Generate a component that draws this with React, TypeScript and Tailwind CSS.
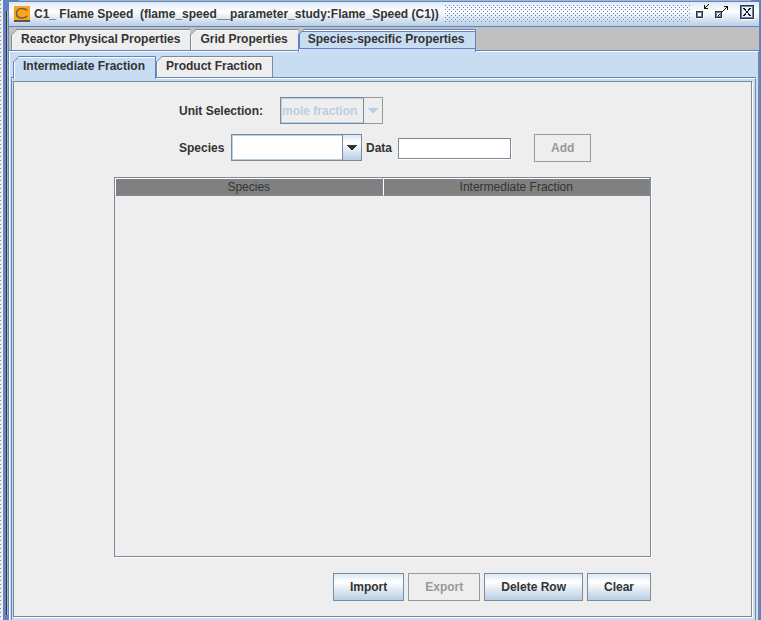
import React, { useState } from "react";
import clsx from "clsx";

const mainTabs = [
  "Reactor Physical Properties",
  "Grid Properties",
  "Species-specific Properties",
];
const fractionTabs = ["Intermediate Fraction", "Product Fraction"];

const TitleBar = () => {
  return (
    <header className="flex h-[25px] items-center border-b border-[#6382bf] bg-linear-to-b from-[#dce9f5] via-white via-40% to-[#b8cfe5] pr-1 pl-[5px]">
      {/* App logo */}
      <svg width="16" height="16" viewBox="0 0 16 16" className="shrink-0" aria-hidden="true">
        <rect width="16" height="16" fill="#fba31c" />
        <rect y="14" width="16" height="2" fill="#5c5548" />
        <path
          d="M13 4.500C12 3 10.500 2.500 8 2.500C4.500 2.500 2.500 4.500 2.500 7.200C2.500 10 4.500 12 8 12C10.500 12 12 11.300 13 10"
          fill="none"
          stroke="#75604a"
          strokeWidth="1.600"
        />
      </svg>
      <h1 className="ml-1 w-[405px] overflow-hidden text-xs font-bold whitespace-pre">
        C1_ Flame Speed  (flame_speed__parameter_study:Flame_Speed (C1))
      </h1>
      <svg className="mr-[6px] ml-[6px] h-[18px] w-0 flex-1" aria-hidden="true">
        <defs>
          <pattern id="bumps" width="4" height="4" patternUnits="userSpaceOnUse">
            <path d="M0 0h1v1h-1zM2 2h1v1h-1z" fill="#6382bf" />
          </pattern>
        </defs>
        <rect width="100%" height="18" fill="url(#bumps)" />
      </svg>
      <div className="flex shrink-0 items-start self-start pt-[2px]">
        <button type="button" aria-label="Minimize" className="mr-[5px]">
          <svg width="14" height="16" viewBox="0 0 14 16" shapeRendering="crispEdges" className="block">
            <path d="M1 8h7v7h-7z" fill="#fff" />
            <path d="M0 7h7v7h-7z" fill="#333" />
            <path d="M1 8h5v5h-5z" fill="#6382bf" />
            <path d="M2 9h3v3h-3z" fill="#fff" />
            <path d="M8 1h1v3h3v1h-4zM9 3h1v1h-1zM10 2h1v1h-1zM11 1h1v1h-1zM12 0h1v1h-1z" fill="#111" />
          </svg>
        </button>
        <button type="button" aria-label="Maximize" className="mr-[11px]">
          <svg width="14" height="16" viewBox="0 0 14 16" shapeRendering="crispEdges" className="block">
            <path d="M1 8h7v7h-7z" fill="#fff" />
            <path d="M0 7h7v7h-7z" fill="#333" />
            <path d="M1 8h5v5h-5z" fill="#6382bf" />
            <path d="M2 9h3v3h-3z" fill="#fff" />
            <path
              d="M9 2h4v4h-1v-3h-3zM11 3h1v1h-1zM10 4h1v1h-1zM9 5h1v1h-1zM8 6h1v1h-1zM7 7h1v1h-1zM4 10h1v1h-1zM3 11h1v1h-1z"
              fill="#111"
            />
          </svg>
        </button>
        <button type="button" aria-label="Close" className="mt-px">
          <svg width="15" height="15" viewBox="0 0 15 15" shapeRendering="crispEdges" className="block">
            <path d="M1 1h14v14h-14z" fill="#fff" />
            <path d="M0 0h14v14h-14z" fill="#333" />
            <path d="M1 1h12v12h-12z" fill="#6382bf" />
            <path d="M2 2h10v10h-10z" fill="#e9f1fa" />
            <path
              d="M3 3h2v1h-2zM4 4h2v1h-2zM5 5h1v1h-1zM6 6h2v2h-2zM5 8h1v1h-1zM4 9h2v1h-2zM3 10h2v1h-2zM9 3h2v1h-2zM8 4h2v1h-2zM8 5h1v1h-1zM8 8h1v1h-1zM8 9h2v1h-2zM9 10h2v1h-2z"
              fill="#111"
            />
          </svg>
        </button>
      </div>
    </header>
  );
};

interface TabProps {
  label: string;
  selected: boolean;
  last: boolean;
  focused?: boolean;
  // Colour behind the cut-off corner
  corner: string;
  onSelect: () => void;
}

const Tab = ({ label, selected, last, focused = false, corner, onSelect }: TabProps) => {
  const line = selected ? "#6382bf" : "#7a8a99";

  return (
    <button
      type="button"
      role="tab"
      aria-selected={selected}
      onClick={onSelect}
      className={clsx(
        "relative flex items-start border-t border-l pt-px pr-[10px] pl-[9px] text-xs font-bold whitespace-nowrap",
        selected
          ? "-mb-[2px] h-[23px] border-[#6382bf] bg-[#c8ddf2] shadow-[inset_1px_1px_0_#ffffff]"
          : "h-[21px] border-[#7a8a99] bg-[#eeeeee] shadow-[inset_1px_1px_0_#f8f8f8]",
        (last || selected) && "border-r"
      )}
    >
      {label}
      {focused && (
        <span className="pointer-events-none absolute inset-x-0 top-px bottom-[3px] border-y border-l border-[#6382bf]" />
      )}
      <svg width="6" height="6" viewBox="0 0 6 6" className="absolute -top-px -left-px" aria-hidden="true">
        <path d="M0 0h6L0 6z" fill={corner} />
        <path d="M0.500 6L6 0.500" stroke={line} />
      </svg>
    </button>
  );
};

interface ComboBoxProps {
  id: string;
  options: string[];
  disabled?: boolean;
  width: string;
}

const ComboBox = ({ id, options, disabled = false, width }: ComboBoxProps) => (
  <div className={clsx("relative h-[27px] self-start", width)}>
    <select
      id={id}
      disabled={disabled}
      className={clsx(
        "h-full w-full appearance-none border border-[#7a8a99] pr-5 pl-px text-xs font-bold opacity-100 shadow-[inset_0_0_0_1px_#b8cfe5] outline-none",
        disabled ? "bg-[#eeeeee] text-[#b8cfe5]" : "bg-white text-[#333333]"
      )}
    >
      {options.map((option) => (
        <option key={option}>{option}</option>
      ))}
    </select>
    <span
      className={clsx(
        "pointer-events-none absolute inset-y-0 right-0 flex w-5 items-center justify-center border",
        disabled
          ? "border-[#999999] border-l-[#7a8a99] bg-[#eeeeee] text-[#b8cfe5]"
          : "border-[#7a8a99] bg-linear-to-b from-[#dde8f3] via-white via-30% to-[#b8cfe5] text-[#333333]"
      )}
    >
      <svg width="10" height="5" viewBox="0 0 10 5" shapeRendering="crispEdges" aria-hidden="true">
        <path d="M0 0h10v1h-1v1h-1v1h-1v1h-1v1h-2v-1h-1v-1h-1v-1h-1v-1h-1z" fill="currentColor" />
      </svg>
    </span>
  </div>
);

const Button = ({ className, ...props }: React.ButtonHTMLAttributes<HTMLButtonElement>) => (
  <button
    type="button"
    className={clsx(
      "h-7 border border-[#7a8a99] bg-linear-to-b from-[#dde8f3] via-white via-30% to-[#b8cfe5] px-4 text-xs font-bold",
      "disabled:border-[#999999] disabled:bg-none disabled:text-[#999999]",
      className
    )}
    {...props}
  />
);

const FractionPanel = () => {
  const [value, setValue] = useState("");

  return (
    <div className="flex flex-1 flex-col border border-[#7a8a99] bg-[#eeeeee] px-[100px] py-[15px] shadow-[1px_1px_0_#ffffff]">
      <div className="flex items-center pl-[65px] text-xs font-bold">
        <label htmlFor="unit" className="w-[101px]">
          Unit Selection:
        </label>
        <ComboBox id="unit" options={["mole fraction"]} disabled width="w-[103px]" />
      </div>

      <div className="mt-[10px] flex items-center pl-[65px] text-xs font-bold">
        <label htmlFor="species" className="w-[52px]">
          Species
        </label>
        <ComboBox id="species" options={[""]} width="w-[131px]" />
        <label htmlFor="data" className="ml-1 w-8">
          Data
        </label>
        <input
          id="data"
          type="text"
          value={value}
          onChange={(e) => setValue(e.target.value)}
          className="h-[21px] w-[113px] border border-[#7a8a99] bg-white px-1 font-normal shadow-[1px_1px_0_#ffffff] outline-none"
        />
        <Button disabled className="ml-[23px]">
          Add
        </Button>
      </div>

      <div className="mt-[15px] flex-1 border border-[#7a8a99] shadow-[1px_1px_0_#ffffff]">
        <table className="w-full table-fixed border-separate border-spacing-0 text-xs">
          <thead>
            <tr className="bg-[#808080]">
              <th className="h-[18px] border-t border-r border-b border-l border-t-white border-r-[#7a8a99] border-b-[#7a8a99] border-l-white p-0 font-normal">
                Species
              </th>
              <th className="h-[18px] border-t border-r border-b border-l border-t-white border-r-[#7a8a99] border-b-[#7a8a99] border-l-white p-0 font-normal">
                Intermediate Fraction
              </th>
            </tr>
          </thead>
          <tbody />
        </table>
      </div>

      <div className="mt-4 flex justify-end gap-1">
        <Button>Import</Button>
        <Button disabled>Export</Button>
        <Button>Delete Row</Button>
        <Button>Clear</Button>
      </div>
    </div>
  );
};

export default function App() {
  const [tab, setTab] = useState(mainTabs[2]);
  const [fractionTab, setFractionTab] = useState(fractionTabs[0]);

  return (
    <div className="flex min-h-screen bg-[#6382bf] font-['Liberation_Sans',sans-serif] text-[#333333]">
      {/* Split pane divider and window frame on the left */}
      <div className="w-[3px] bg-[#eeeeee]">
        <div className="h-full w-px bg-[repeating-linear-gradient(#7a8a99_0_1px,#eeeeee_1px_4px)]" />
      </div>
      <div className="flex w-[6px] pt-[11px] pb-[5px] pl-[3px]">
        <div className="w-px bg-[#333333]" />
        <div className="w-px bg-[#a3b8cc]" />
      </div>

      <main className="mr-[2px] flex min-w-0 flex-1 flex-col">
        <div className="mr-2 mb-px ml-[10px] h-px bg-[#a3b8cc]" />
        <TitleBar />

        <div role="tablist" className="flex items-start border-b border-[#6382bf] bg-[#c0c0c0] pt-[2px] pl-[2px]">
          {mainTabs.map((name, i) => (
            <Tab
              key={name}
              label={name}
              selected={name === tab}
              focused={name === tab}
              last={i === mainTabs.length - 1}
              corner="#c0c0c0"
              onSelect={() => setTab(name)}
            />
          ))}
        </div>

        <div className="flex flex-1 flex-col border-t border-r border-l border-t-white border-r-[#7a8a99] border-l-white bg-[#c8ddf2] pr-[2px] pl-px">
          <div role="tablist" className="flex items-start border-b border-[#6382bf] pt-1 pl-[2px]">
            {fractionTabs.map((name, i) => (
              <Tab
                key={name}
                label={name}
                selected={name === fractionTab}
                last={i === fractionTabs.length - 1}
                corner="#c8ddf2"
                onSelect={() => setFractionTab(name)}
              />
            ))}
          </div>

          <div className="flex flex-1 flex-col border-t border-r border-l border-t-white border-r-[#7a8a99] border-l-[#6382bf] pt-[2px] pr-[3px] pb-[3px] pl-px">
            <FractionPanel />
          </div>
        </div>
      </main>
    </div>
  );
}
